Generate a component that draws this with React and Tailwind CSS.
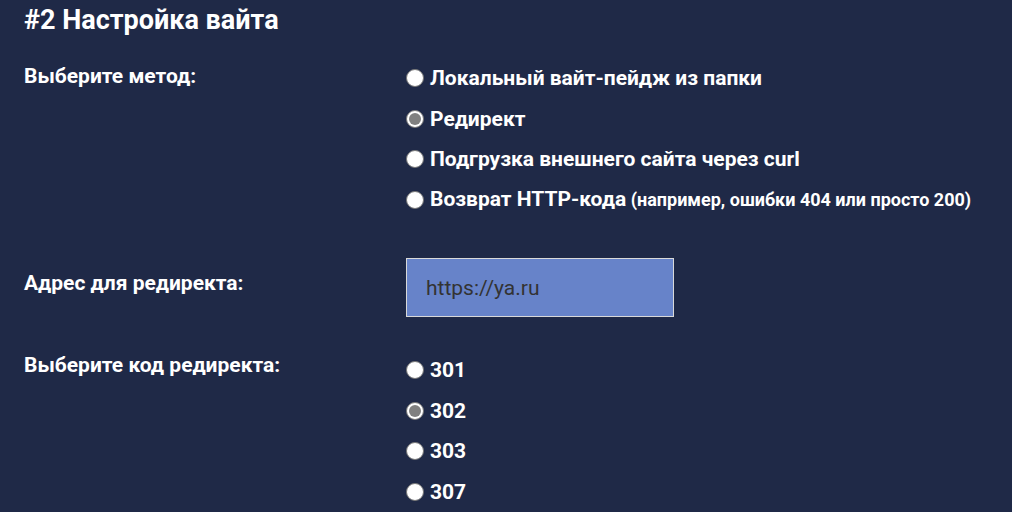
import { useState } from "react";

const methods = [
  { id: "local", label: "Локальный вайт-пейдж из папки" },
  { id: "redirect", label: "Редирект" },
  { id: "curl", label: "Подгрузка внешнего сайта через curl" },
  { id: "http", label: "Возврат HTTP-кода", note: "(например, ошибки 404 или просто 200)" },
];

const codes = ["301", "302", "303", "307"];

function Radio({ checked, onClick, children }) {
  return (
    <div onClick={onClick} className="flex h-[40.5px] cursor-pointer items-center">
      <span className="flex h-[18px] w-[18px] shrink-0 items-center justify-center rounded-full border border-[#767676] bg-white">
        {checked && <span className="h-[12px] w-[12px] rounded-full bg-[#808080]" />}
      </span>
      <span className="ml-[6px] text-[21px] leading-7 font-bold">{children}</span>
    </div>
  );
}

export default function App() {
  const [method, setMethod] = useState("redirect");
  const [code, setCode] = useState("302");
  const [url, setUrl] = useState("https://ya.ru");

  return (
    <div className="min-h-screen bg-[#1f2947] px-6 font-['Roboto',sans-serif] text-white">
      <h2 className="pt-1 text-[27px] leading-8 font-bold">#2 Настройка вайта</h2>

      <div className="mt-[22px] grid grid-cols-[382px_1fr]">
        <div className="pt-[6px] text-[21px] leading-6 font-bold">Выберите метод:</div>
        <div>
          {methods.map((m) => (
            <Radio key={m.id} checked={method === m.id} onClick={() => setMethod(m.id)}>
              {m.label}
              {m.note && <span className="text-[18px]"> {m.note}</span>}
            </Radio>
          ))}
        </div>

        <div className="mt-[38px] pt-[13px] text-[21px] leading-6 font-bold">Адрес для редиректа:</div>
        <div className="mt-[38px]">
          <input
            value={url}
            onChange={(e) => setUrl(e.target.value)}
            className="h-[59px] w-[268px] border border-[#d9d9d9] bg-[#6783c9] px-[19px] text-[21px] text-[#333] outline-none"
          />
        </div>

        <div className="mt-[33px] pt-[3px] text-[21px] leading-6 font-bold">Выберите код редиректа:</div>
        <div className="mt-[33px]">
          {codes.map((c) => (
            <Radio key={c} checked={code === c} onClick={() => setCode(c)}>
              {c}
            </Radio>
          ))}
        </div>
      </div>
    </div>
  );
}
